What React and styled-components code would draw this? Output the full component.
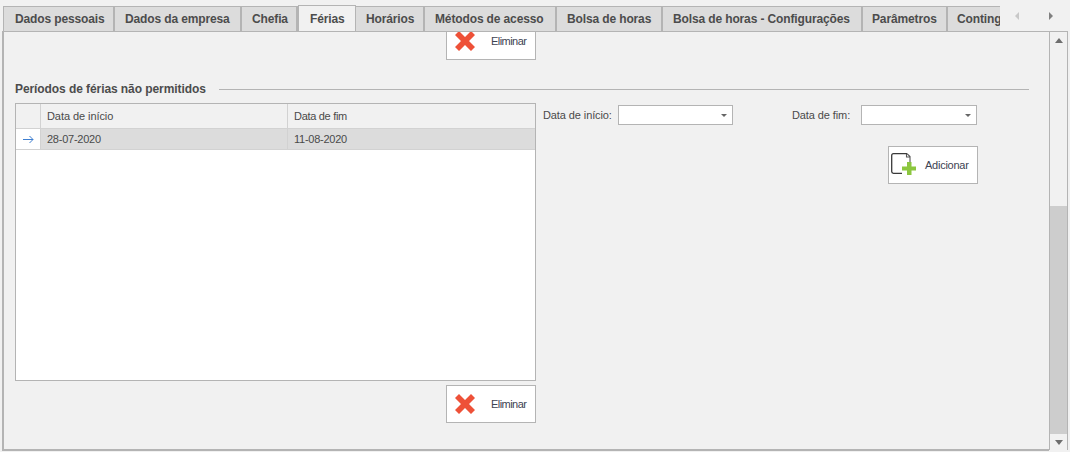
import React from "react";
import styled, { createGlobalStyle } from "styled-components";

const Global = createGlobalStyle`
  html, body { margin: 0; padding: 0; background: #f1f1f1; }
  body { font-family: "Liberation Sans", Arial, sans-serif; color: #4a4a4a; }
  * { box-sizing: border-box; }
`;

const Frame = styled.div`
  width: 1070px;
  height: 452px;
  overflow: hidden;
  background: #f1f1f1;
  display: flex;
  flex-direction: column;
`;

const TabBar = styled.div`
  height: 32px;
  padding: 5px 0 0 3px;
  display: flex;
  align-items: flex-end;
`;

const TabStrip = styled.div`
  width: 997px;
  overflow: hidden;
  display: flex;
  align-items: flex-end;
  flex: none;
`;

const Tab = styled.div`
  flex: none;
  width: ${p => p.$w}px;
  height: ${p => (p.$active ? 27 : 26)}px;
  background: ${p => (p.$active ? "#f1f1f1" : "#dcdcdc")};
  border: 1px solid #b4b4b4;
  border-left-width: ${p => (p.$first || p.$active ? 1 : 0)}px;
  border-bottom: ${p => (p.$active ? "none" : "1px solid #b4b4b4")};
  border-right-width: ${p => (p.$last ? 0 : p.$active ? 1 : 2)}px;
  padding: ${p => (p.$active ? 6 : 5)}px 0 0 ${p => p.$pad}px;
  font-size: 12px;
  font-weight: 700;
  line-height: 15px;
  letter-spacing: -0.13px;
  white-space: nowrap;
  overflow: hidden;
  color: #4c4c4c;
`;

const TabArrows = styled.div`
  display: flex;
  align-items: center;
  height: 25px;
  padding: 0 0 7px 13px;
  gap: 26px;
`;

const Panel = styled.div`
  flex: none;
  width: 1066px;
  height: 420px;
  margin-left: 2px;
  margin-top: -1px;
  border-top: 1px solid #b4b4b4;
  border-left: 2px solid #b4b4b4;
  display: flex;
`;

const Content = styled.div`
  flex: 1;
  padding-left: 11px;
  overflow: hidden;
  height: 419px;
  border-bottom: 2px solid #b4b4b4;
`;

const TopActions = styled.div`
  width: 521px;
  display: flex;
  justify-content: flex-end;
`;

const ActionButton = styled.div`
  width: 90px;
  height: ${p => (p.$clipped ? 28 : 38)}px;
  background: #fff;
  border: 1px solid #b4b4b4;
  border-top-width: ${p => (p.$clipped ? 0 : 1)}px;
  display: flex;
  align-items: center;
  overflow: hidden;
  font-size: 11px;
  letter-spacing: ${p => p.$ls}px;
  color: #3d4352;
  flex: none;
`;

const RemoveIcon = styled.svg`
  width: 22px;
  height: 22px;
  margin: ${p => (p.$clipped ? "-9px 15px 0 7px" : "0 15px 0 7px")};
  flex: none;
`;

const ActionLabel = styled.span`
  margin-top: ${p => (p.$clipped ? -9 : 0)}px;
`;

const SectionHead = styled.div`
  margin-top: 21px;
  height: 15px;
  width: 1014px;
  display: flex;
  align-items: center;
  gap: 13px;
`;

const SectionTitle = styled.h2`
  margin: 0;
  font-size: 12px;
  font-weight: 700;
  letter-spacing: -0.08px;
  color: #4c4c4c;
  white-space: nowrap;
`;

const Rule = styled.div`
  flex: 1;
  height: 1px;
  margin-top: 1px;
  background: #b4b4b4;
`;

const Body = styled.div`
  margin-top: 7px;
  display: flex;
`;

const LeftColumn = styled.div`
  width: 521px;
  flex: none;
  display: flex;
  flex-direction: column;
  align-items: flex-end;
  gap: 4px;
`;

const Grid = styled.div`
  width: 521px;
  height: 278px;
  background: #fff;
  border: 1px solid #b4b4b4;
`;

const GridRow = styled.div`
  display: grid;
  grid-template-columns: 25px 247px 1fr;
  height: ${p => (p.$head ? 25 : 21)}px;
  background: ${p => (p.$head ? "#f1f1f1" : "#fff")};
  border-bottom: 1px solid #d2d2d2;
`;

const Cell = styled.div`
  display: flex;
  align-items: center;
  padding-left: 6px;
  font-size: 11px;
  color: #4a4a4a;
  letter-spacing: ${p => p.$ls ?? -0.07}px;
  background: ${p => (p.$selected ? "#dcdcdc" : "transparent")};
  border-right: ${p => (p.$end ? "none" : "1px solid #d2d2d2")};
`;

const Indicator = styled.div`
  display: flex;
  align-items: center;
  justify-content: center;
  border-right: 1px solid #d2d2d2;
`;

const RightColumn = styled.div`
  flex: 1;
  padding: 2px 0 0 7px;
`;

const FieldRow = styled.div`
  display: flex;
  align-items: center;
  height: 20px;
`;

const FieldLabel = styled.label`
  width: ${p => p.$w}px;
  margin-left: ${p => p.$ml ?? 0}px;
  font-size: 11px;
  letter-spacing: -0.1px;
  color: #4a4a4a;
  flex: none;
  white-space: nowrap;
`;

const DateField = styled.div`
  width: ${p => p.$w}px;
  height: 20px;
  background: #fff;
  border: 1px solid #b4b4b4;
  display: flex;
  align-items: center;
  justify-content: flex-end;
  padding-right: 5px;
  flex: none;
`;

const Caret = styled.span`
  width: 0;
  height: 0;
  margin-top: 1px;
  border-left: 3px solid transparent;
  border-right: 3px solid transparent;
  border-top: 3px solid #666;
`;

const AddRow = styled.div`
  margin-top: 21px;
  padding-left: 345px;
`;

const AddIcon = styled.svg`
  width: 28px;
  height: 28px;
  margin: 0 6px 0 2px;
  flex: none;
`;

const ScrollBar = styled.div`
  width: 19px;
  height: 418px;
  flex: none;
  border-left: 1px solid #b4b4b4;
  border-right: 1px solid #b4b4b4;
  background: #f1f1f1;
  display: flex;
  flex-direction: column;
`;

const ScrollButton = styled.div`
  height: 16px;
  flex: none;
  display: flex;
  align-items: center;
  justify-content: center;
`;

const ScrollTrack = styled.div`
  flex: 1;
  display: flex;
  flex-direction: column;
  justify-content: flex-end;
`;

const ScrollThumb = styled.div`
  height: 228px;
  background: #cdcdcd;
`;

const Triangle = ({ dir, color }) => {
  const pts = { up: "0,7 4,2 8,7", down: "0,2 8,2 4,7", left: "6,0 6,8 2,4", right: "2,0 2,8 6,4" }[dir];
  return (
    <svg width="8" height="8" viewBox="0 0 8 8">
      <polygon points={pts} fill={color} />
    </svg>
  );
};

const Remove = ({ clipped }) => (
  <ActionButton $clipped={clipped} $ls={-0.55}>
    <RemoveIcon $clipped={clipped} viewBox="0 0 22 22">
      <path d="M1 5 5 1 11 7 17 1 21 5 15 11 21 17 17 21 11 15 5 21 1 17 7 11Z" fill="#ee5138" />
    </RemoveIcon>
    <ActionLabel $clipped={clipped}>Eliminar</ActionLabel>
  </ActionButton>
);

const tabs = [
  ["Dados pessoais", 112, 11], ["Dados da empresa", 127, 10], ["Chefia", 56, 10], ["Férias", 58, 11],
  ["Horários", 69, 10], ["Métodos de acesso", 132, 10], ["Bolsa de horas", 106, 10],
  ["Bolsa de horas - Configurações", 200, 10], ["Parâmetros", 85, 9], ["Contingências", 60, 9],
];

export default function App() {
  return (
    <Frame>
      <Global />
      <TabBar>
        <TabStrip>
          {tabs.map(([label, w, pad], i) => (
            <Tab key={label} $w={w} $pad={pad} $first={i === 0} $active={label === "Férias"} $last={i === tabs.length - 1}>
              {label}
            </Tab>
          ))}
        </TabStrip>
        <TabArrows>
          <Triangle dir="left" color="#c8c8c8" />
          <Triangle dir="right" color="#808080" />
        </TabArrows>
      </TabBar>
      <Panel>
        <Content>
          <TopActions>
            <Remove clipped />
          </TopActions>
          <SectionHead>
            <SectionTitle>Períodos de férias não permitidos</SectionTitle>
            <Rule />
          </SectionHead>
          <Body>
            <LeftColumn>
              <Grid>
                <GridRow $head>
                  <Indicator />
                  <Cell>Data de início</Cell>
                  <Cell $end $ls={-0.3}>Data de fim</Cell>
                </GridRow>
                <GridRow>
                  <Indicator>
                    <svg width="11" height="9" viewBox="0 0 11 9">
                      <path d="M0 4.5H10M6.5 1 10 4.5 6.5 8" fill="none" stroke="#3f7fd0" strokeWidth="1" />
                    </svg>
                  </Indicator>
                  <Cell $selected $ls={-0.25}>28-07-2020</Cell>
                  <Cell $selected $end $ls={-0.25}>11-08-2020</Cell>
                </GridRow>
              </Grid>
              <Remove />
            </LeftColumn>
            <RightColumn>
              <FieldRow>
                <FieldLabel $w={75}>Data de início:</FieldLabel>
                <DateField $w={115}><Caret /></DateField>
                <FieldLabel $w={69} $ml={59}>Data de fim:</FieldLabel>
                <DateField $w={116}><Caret /></DateField>
              </FieldRow>
              <AddRow>
                <ActionButton $ls={-0.25}>
                  <AddIcon viewBox="0 0 28 28">
                    <path d="M16 2.7H2.5Q0.7 2.7 0.7 4.5V20.5Q0.7 22.3 2.5 22.3H11" fill="none" stroke="#3a3a3a" strokeWidth="1.3" />
                    <path d="M16 2.7 19 5.5V11M15.5 3V6H19" fill="none" stroke="#555" strokeWidth="1.1" />
                    <path d="M16 11H20.5V15.5H25V19.5H20.5V24H16V19.5H11V15.5H16Z" fill="#8cc63f" />
                  </AddIcon>
                  Adicionar
                </ActionButton>
              </AddRow>
            </RightColumn>
          </Body>
        </Content>
        <ScrollBar>
          <ScrollButton><Triangle dir="up" color="#6e6e6e" /></ScrollButton>
          <ScrollTrack><ScrollThumb /></ScrollTrack>
          <ScrollButton><Triangle dir="down" color="#6e6e6e" /></ScrollButton>
        </ScrollBar>
      </Panel>
    </Frame>
  );
}
